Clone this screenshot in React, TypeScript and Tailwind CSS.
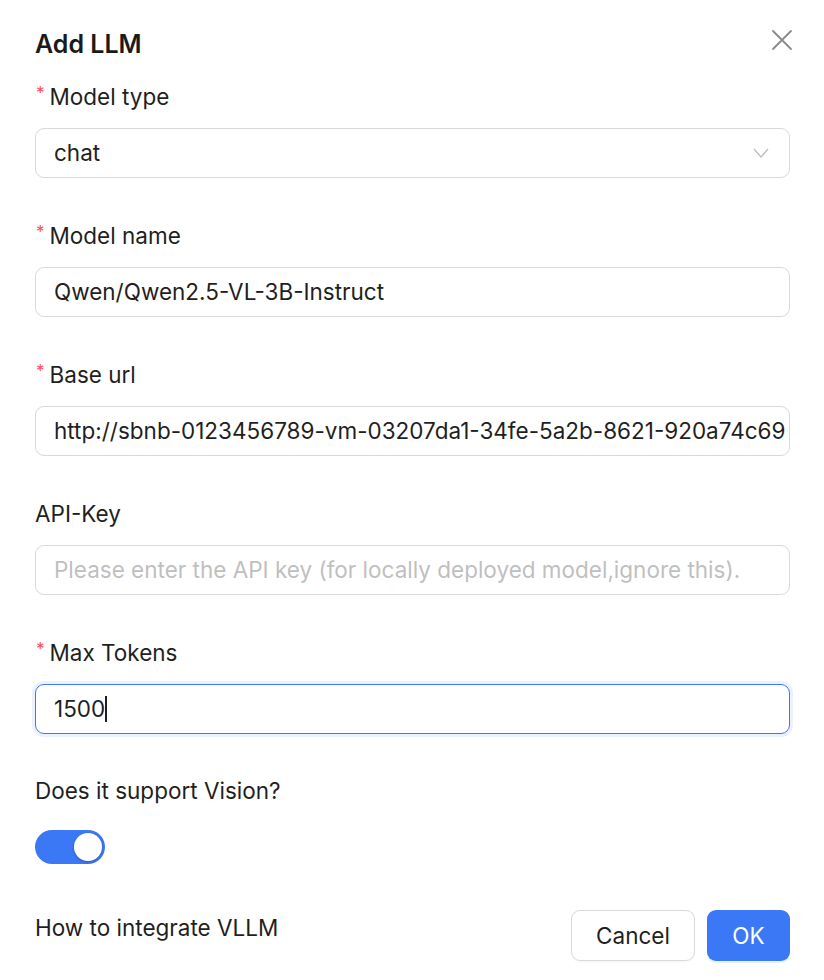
import React from "react";

const font = { fontFamily: "Inter, 'Noto Sans', sans-serif" };

function Label({ text, required }: { text: string; required?: boolean }) {
  return (
    <div className="flex items-start h-[30px] leading-[30px] text-[22.5px] text-[#1f1f1f] mb-[16px]">
      {required && <span className="text-[#ff4d4f] text-[17px] leading-[22px] mr-[5px] ml-[1px]">*</span>}
      <span>{text}</span>
    </div>
  );
}

export default function App() {
  return (
    <div className="w-[824px] h-[980px] bg-white overflow-hidden" style={font}>
      <div className="pl-[35px] pr-[34px] pt-[29px]">
        <div className="flex items-center justify-between h-[30px] mb-[23px]">
          <div className="text-[25px] font-semibold text-[#1a1a1a] leading-[30px]">Add LLM</div>
          <svg width="22" height="22" viewBox="0 0 22 22" className="mr-[-3px] mt-[-8px]">
            <path d="M2 2 L20 20 M20 2 L2 20" stroke="#8a8a8a" strokeWidth="1.8" strokeLinecap="round" />
          </svg>
        </div>

        <Label text="Model type" required />
        <div className="h-[50px] rounded-[9px] border border-[#d9d9d9] flex items-center justify-between pl-[18px] pr-[20px] mb-[43px]">
          <span className="text-[22.5px] text-[#1f1f1f]">chat</span>
          <svg width="16" height="10" viewBox="0 0 16 10">
            <path d="M1 1 L8 9 L15 1" stroke="#bfbfbf" strokeWidth="1.4" fill="none" />
          </svg>
        </div>

        <Label text="Model name" required />
        <div className="h-[50px] rounded-[9px] border border-[#d9d9d9] flex items-center pl-[18px] mb-[43px]">
          <span className="text-[22.5px] text-[#1f1f1f]">Qwen/Qwen2.5-VL-3B-Instruct</span>
        </div>

        <Label text="Base url" required />
        <div className="h-[50px] rounded-[9px] border border-[#d9d9d9] flex items-center pl-[18px] pr-[2px] mb-[43px] overflow-hidden">
          <span className="text-[22.5px] text-[#1f1f1f] whitespace-nowrap overflow-hidden">
            http://sbnb-0123456789-vm-03207da1-34fe-5a2b-8621-920a74c69
          </span>
        </div>

        <Label text="API-Key" />
        <div className="h-[50px] rounded-[9px] border border-[#d9d9d9] flex items-center pl-[18px] mb-[43px] overflow-hidden">
          <span className="text-[22.5px] text-[#bfbfbf] whitespace-nowrap">
            Please enter the API key (for locally deployed model,ignore this).
          </span>
        </div>

        <Label text="Max Tokens" required />
        <div className="h-[50px] rounded-[9px] border border-[#3b78f5] shadow-[0_0_0_3px_rgba(59,120,245,0.1)] flex items-center pl-[18px] mb-[42px]">
          <span className="text-[22.5px] text-[#1f1f1f]">1500</span>
          <span className="w-[1.5px] h-[26px] bg-[#1f1f1f]" />
        </div>

        <div className="h-[30px] leading-[30px] text-[22.5px] text-[#1f1f1f] mb-[24px]">Does it support Vision?</div>

        <div className="w-[70px] h-[34px] rounded-full bg-[#3b78f5] flex items-center justify-end pr-[3px] mb-[46px]">
          <div className="w-[28px] h-[28px] rounded-full bg-white shadow-[0_1px_3px_rgba(0,0,0,0.25)]" />
        </div>

        <div className="flex items-start justify-between">
          <div className="text-[22.5px] leading-[30px] text-[#1f1f1f] mt-[3px]">How to integrate VLLM</div>
          <div className="flex gap-[12px]">
            <div className="w-[124px] h-[51px] rounded-[9px] border border-[#d9d9d9] flex items-center justify-center text-[22.5px] text-[#1f1f1f] shadow-[0_2px_0_rgba(0,0,0,0.02)]">
              Cancel
            </div>
            <div className="w-[83px] h-[51px] rounded-[9px] bg-[#3b78f5] flex items-center justify-center text-[22.5px] text-white shadow-[0_2px_0_rgba(5,145,255,0.1)]">
              OK
            </div>
          </div>
        </div>
      </div>
    </div>
  );
}
